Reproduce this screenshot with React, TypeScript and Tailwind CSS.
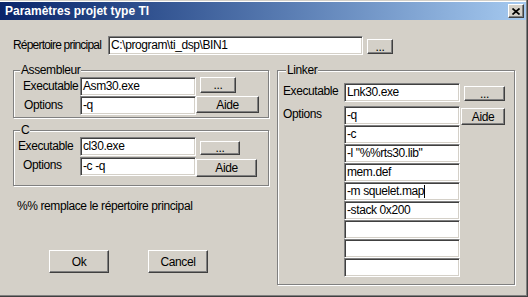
import React from "react"

const field =
  "bg-white border border-t-[#808080] border-l-[#808080] border-r-white border-b-white shadow-[inset_1px_1px_0_#404040,inset_-1px_-1px_0_#d4d0c8] pl-[2px] leading-[17px] h-[19px] whitespace-nowrap overflow-hidden"
const btn =
  "bg-[#d4d0c8] border border-t-white border-l-white border-r-[#404040] border-b-[#404040] shadow-[inset_-1px_-1px_0_#808080] flex items-center justify-center"
const group = "border border-[#808080] shadow-[inset_1px_1px_0_#fff,1px_1px_0_#fff] p-0 m-0"

function Field({ w, children }: { w: string; children?: React.ReactNode }) {
  return <div className={`${field} ${w}`}>{children}</div>
}

const linkerOpts = ['-q', '-c', '-l "%%rts30.lib"', 'mem.def', '-m squelet.map', '-stack 0x200', '', '', '']

export default function App() {
  return (
    <div className="w-[528px] h-[297px] bg-[#d4d0c8] pt-[2px] pr-[2px] pb-[2px] text-[12px] tracking-[-0.4px] text-black font-['Liberation_Sans',Arial,sans-serif] shadow-[inset_-1px_-1px_0_#404040,inset_-2px_-2px_0_#808080,inset_0_1px_0_#d4d0c8,inset_0_2px_0_#fff] overflow-hidden">
      {/* title bar */}
      <div className="h-[18px] flex items-center bg-gradient-to-r from-[#0a246a] to-[#a6caf0] pl-[5px]">
        <span className="text-white font-bold text-[12px] tracking-normal leading-[18px]">Paramètres projet type TI</span>
        <div className={`${btn} ml-auto mr-[2px] w-[16px] h-[14px]`}>
          <svg width="8" height="7" viewBox="0 0 8 7">
            <path d="M0.5 0.5L7.5 6.5M7.5 0.5L0.5 6.5" stroke="#000" strokeWidth="1.7" />
          </svg>
        </div>
      </div>

      {/* main directory */}
      <div className="flex items-start mt-[16px] pl-[13px]">
        <span className="w-[95px] leading-[19px] tracking-[-0.8px]">Répertoire principal</span>
        <Field w="w-[255px]">C:\program\ti_dsp\BIN1</Field>
        <div className={`${btn} ml-[4px] mt-[3px] w-[26px] h-[15px]`}>...</div>
      </div>

      <div className="flex items-start mt-[9px] pl-[13px]">
        {/* left column */}
        <div className="w-[256px] flex flex-col">
          <fieldset className={group}>
            <legend className="ml-[6px] px-[1px] leading-[13px] bg-[#d4d0c8]">Assembleur</legend>
            <div className="pb-[2px]">
              <div className="flex items-start">
                <span className="ml-[9px] w-[57px] leading-[19px]">Executable</span>
                <Field w="w-[116px]">Asm30.exe</Field>
                <div className={`${btn} ml-[4px] w-[36px] h-[16px]`}>...</div>
              </div>
              <div className="flex items-start">
                <span className="ml-[10px] w-[56px] leading-[19px]">Options</span>
                <Field w="w-[116px]">-q</Field>
                <div className={`${btn} w-[63px] h-[17px]`}>Aide</div>
              </div>
            </div>
          </fieldset>

          <fieldset className={`${group} mt-[6px]`}>
            <legend className="ml-[6px] px-[1px] leading-[13px] bg-[#d4d0c8]">C</legend>
            <div className="pb-[8px]">
              <div className="flex items-start">
                <span className="ml-[4px] w-[62px] leading-[19px]">Executable</span>
                <Field w="w-[116px]">cl30.exe</Field>
                <div className={`${btn} ml-[4px] mt-[4px] w-[40px] h-[14px]`}>...</div>
              </div>
              <div className="flex items-start mt-[1px]">
                <span className="ml-[9px] w-[57px] leading-[17px]">Options</span>
                <Field w="w-[116px]">-c -q</Field>
                <div className={`${btn} mt-[2px] w-[61px] h-[18px]`}>Aide</div>
              </div>
            </div>
          </fieldset>

          <p className="mt-[14px] pl-[4px] leading-[13px]">%% remplace le répertoire principal</p>

          <div className="flex mt-[37px] pl-[36px]">
            <div className={`${btn} w-[60px] h-[23px]`}>Ok</div>
            <div className={`${btn} ml-[39px] w-[60px] h-[23px]`}>Cancel</div>
          </div>
        </div>

        {/* linker */}
        <fieldset className={`${group} ml-[8px] w-[238px] h-[221px]`}>
          <legend className="ml-[8px] px-[1px] leading-[13px] bg-[#d4d0c8]">Linker</legend>
          <div className="flex items-start mt-[6px]">
            <span className="ml-[5px] w-[61px] leading-[17px]">Executable</span>
            <Field w="w-[116px]">Lnk30.exe</Field>
            <div className={`${btn} ml-[4px] mt-[3px] w-[41px] h-[15px]`}>...</div>
          </div>
          <div className="flex items-start mt-[4px]">
            <span className="ml-[5px] w-[61px] leading-[17px]">Options</span>
            <div className="flex flex-col w-[116px]">
              {linkerOpts.map((o, i) => (
                <div key={i} className={`${field} w-[116px] flex items-center`}>
                  {o}
                  {i === 4 && <span className="w-px h-[13px] bg-black" />}
                </div>
              ))}
            </div>
            <div className={`${btn} ml-px mt-[2px] w-[44px] h-[17px]`}>Aide</div>
          </div>
        </fieldset>
      </div>
    </div>
  )
}
